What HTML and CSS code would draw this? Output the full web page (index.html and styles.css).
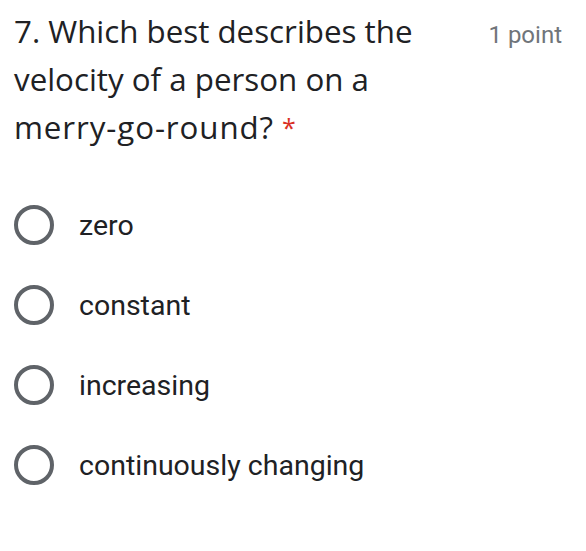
FILE: index.html
```html
<!DOCTYPE html>
<html>
<head>
<meta charset="utf-8">
<link rel="stylesheet" href="styles.css">
</head>
<body>
<div class="question">
  <div class="header">
    <div class="title">7. Which best describes the velocity of a person on a <span class="nowrap">merry-go-round?</span> <span class="req">*</span></div>
    <div class="points">1 point</div>
  </div>
  <div class="options">
    <div class="option"><span class="radio"></span><span class="label">zero</span></div>
    <div class="option"><span class="radio"></span><span class="label">constant</span></div>
    <div class="option"><span class="radio"></span><span class="label">increasing</span></div>
    <div class="option"><span class="radio"></span><span class="label">continuously changing</span></div>
  </div>
</div>
</body>
</html>
```

FILE: styles.css
```css
html, body {
  margin: 0;
  padding: 0;
  background: #ffffff;
}
.question {
  padding: 7px 24px 0 14px;
  font-family: Roboto, "Liberation Sans", sans-serif;
}
.header {
  display: flex;
  justify-content: space-between;
  align-items: flex-start;
}
.title {
  width: 440px;
  font-family: "Open Sans", Roboto, sans-serif;
  font-size: 31.3px;
  line-height: 48px;
  color: #202124;
}
.nowrap {
  white-space: nowrap;
  letter-spacing: 0.9px;
}
.req {
  color: #d93025;
  font-size: 25px;
  vertical-align: 2px;
}
.points {
  font-size: 24px;
  line-height: 48px;
  margin-top: 4px;
  color: #70757a;
}
.options {
  margin-top: 54px;
  display: flex;
  flex-direction: column;
  gap: 40px;
}
.option {
  display: flex;
  align-items: center;
  height: 40px;
}
.radio {
  box-sizing: border-box;
  width: 40px;
  height: 40px;
  border: 4px solid #5f6368;
  border-radius: 50%;
  flex: none;
}
.label {
  margin-left: 25px;
  font-size: 28.5px;
  color: #202124;
}
```
